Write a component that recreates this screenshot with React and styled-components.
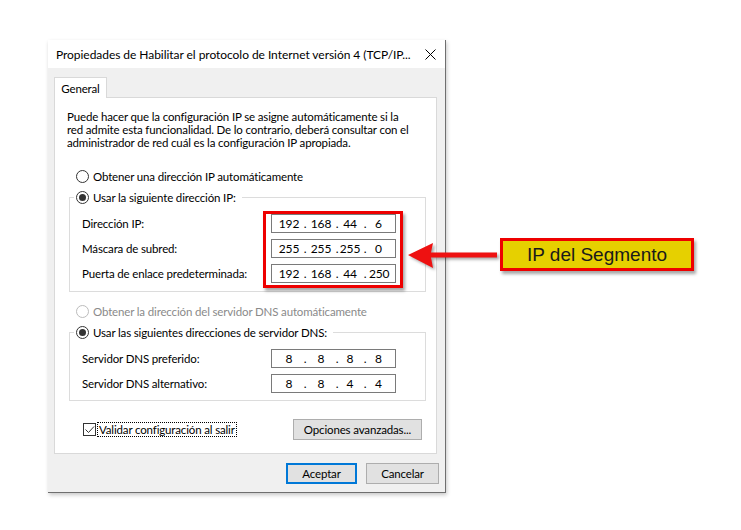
import React from 'react';
import styled, { createGlobalStyle } from 'styled-components';

const GlobalStyle = createGlobalStyle`
    body {
        margin: 0;
        background: #fff;
        font-family: Lato, "Noto Sans", sans-serif;
        font-size: 11.5px;
        letter-spacing: -0.15px;
        color: #000;
    }
`;

const Canvas = styled.div`
    position: relative;
    width: 741px;
    height: 530px;
    overflow: hidden;
    padding: 40px 0 0 48px;
    box-sizing: border-box;
`;

const Window = styled.div`
    width: 398px;
    height: 453px;
    box-sizing: border-box;
    display: flex;
    flex-direction: column;
    background: #f0f0f0;
    border-right: 1px solid #6f6f6f;
    border-bottom: 1px solid #6f6f6f;
    box-shadow: 1px 2px 4px rgba(0, 0, 0, 0.22);
`;

const TitleBar = styled.div`
    height: 28px;
    flex: none;
    background: #fff;
    display: flex;
    align-items: center;
    justify-content: space-between;
    padding: 0 9px 0 8px;
    white-space: nowrap;
`;

const Title = styled.span`
    font-size: 12px;
    letter-spacing: -0.05px;
    overflow: hidden;
`;

const Body = styled.div`
    flex: 1;
    display: flex;
    flex-direction: column;
    padding: 9px 8px 0 6px;
`;

const Tab = styled.div`
    width: 53px;
    height: 21px;
    box-sizing: border-box;
    display: flex;
    align-items: center;
    justify-content: center;
    background: #fff;
    border: 1px solid #d9d9d9;
    border-bottom: none;
    margin-bottom: -1px;
    position: relative;
    z-index: 1;
`;

const Panel = styled.div`
    width: 383px;
    height: 357px;
    box-sizing: border-box;
    background: #fff;
    border: 1px solid #d9d9d9;
    padding: 12px 0 0 12px;
    display: flex;
    flex-direction: column;
    white-space: nowrap;
`;

const Intro = styled.p`
    margin: 0;
    line-height: 13px;
`;

const RadioRow = styled.label`
    display: flex;
    align-items: center;
    gap: 4px;
    height: 13px;
    line-height: 13px;
    margin: ${p => p.$top}px 0 0 9px;
    color: ${p => (p.$disabled ? '#8a8a8a' : '#000')};
`;

const Radio = styled.span`
    width: 13px;
    height: 13px;
    box-sizing: border-box;
    border-radius: 50%;
    border: 1px solid ${p => (p.$disabled ? '#bcbcbc' : '#333')};
    background: #fff;
    display: flex;
    align-items: center;
    justify-content: center;
    flex: none;

    &::after {
        content: '';
        width: 7px;
        height: 7px;
        border-radius: 50%;
        background: ${p => (p.$checked ? '#333' : 'transparent')};
    }
`;

const Group = styled.fieldset`
    width: 357px;
    box-sizing: border-box;
    margin: 8px 0 0 2px;
    padding: 10px 0 ${p => p.$bottom}px 0;
    border: 1px solid #dcdcdc;
    display: flex;
    flex-direction: column;
    gap: 6px;
`;

const Legend = styled.legend`
    margin-left: 4px;
    padding: 0 6px 0 2px;
    line-height: 13px;
    display: flex;
    align-items: center;
    gap: 4px;
`;

const FieldRow = styled.div`
    display: flex;
    align-items: center;
    height: 19px;
    padding-left: 12px;
`;

const FieldLabel = styled.span`
    width: 189px;
    flex: none;
`;

const IpBox = styled.div`
    width: 125px;
    height: 19px;
    box-sizing: border-box;
    border: 1px solid #7a7a7a;
    background: #fff;
    display: flex;
    align-items: center;
    padding-left: 3px;
    line-height: 17px;
    font-size: 12px;
`;

const Octet = styled.span`
    width: ${p => p.$w}px;
    text-align: center;
    flex: none;
`;

const Footer = styled.div`
    display: flex;
    align-items: center;
    justify-content: space-between;
    margin: 18px 0 0 16px;
    width: 339px;
`;

const CheckLabel = styled.label`
    display: flex;
    align-items: center;
    gap: 1px;
`;

const CheckBox = styled.span`
    width: 13px;
    height: 13px;
    box-sizing: border-box;
    border: 1px solid #333;
    background: #fff;
    display: flex;
    align-items: center;
    justify-content: center;
`;

const Focus = styled.span`
    border: 1px dotted #000;
    padding: 0 1px;
    line-height: 13px;
`;

const Button = styled.button`
    font: inherit;
    letter-spacing: inherit;
    color: #000;
    height: 21px;
    width: ${p => p.$w}px;
    padding: 0;
    background: #e1e1e1;
    border: ${p => (p.$primary ? '2px solid #0078d7' : '1px solid #adadad')};
`;

const Actions = styled.div`
    display: flex;
    justify-content: flex-end;
    gap: 9px;
    margin: 9px -2px 0 0;
`;

const Highlight = styled.div`
    position: absolute;
    left: 263px;
    top: 211px;
    width: 140px;
    height: 77px;
    box-sizing: border-box;
    border: 3px solid #ee0000;
    box-shadow: 2px 3px 3px rgba(0, 0, 0, 0.35);
`;

const ArrowSvg = styled.svg`
    position: absolute;
    left: 404px;
    top: 238px;
    filter: drop-shadow(2px 2px 1.5px rgba(0, 0, 0, 0.35));
`;

const Callout = styled.div`
    position: absolute;
    left: 500px;
    top: 238px;
    width: 194px;
    height: 33px;
    box-sizing: border-box;
    border: 3px solid #ee0000;
    background: #e6d000;
    display: flex;
    align-items: center;
    justify-content: center;
    font-family: "Liberation Sans", Arial, sans-serif;
    font-size: 19px;
    letter-spacing: 0;
    color: #1a1a1a;
    box-shadow: 2px 3px 3px rgba(0, 0, 0, 0.35);
`;

const widths = [28, 4, 28, 4, 22, 8, 19];

const IpField = ({ value }) => {
    const parts = value.split('.');
    const cells = [];
    parts.forEach((p, i) => {
        cells.push(<Octet key={'o' + i} $w={widths[i * 2]}>{p}</Octet>);
        if (i < 3) cells.push(<Octet key={'d' + i} $w={widths[i * 2 + 1]}>.</Octet>);
    });
    return <IpBox>{cells}</IpBox>;
};

const Field = ({ label, value }) => (
    <FieldRow>
        <FieldLabel>{label}</FieldLabel>
        <IpField value={value} />
    </FieldRow>
);

export default function App() {
    return (
        <Canvas>
            <GlobalStyle />
            <Window>
                <TitleBar>
                    <Title>Propiedades de Habilitar el protocolo de Internet versión 4 (TCP/IP...</Title>
                    <svg width="11" height="11" viewBox="0 0 11 11">
                        <path d="M0.5 0.5 L10.5 10.5 M10.5 0.5 L0.5 10.5" stroke="#000" strokeWidth="1" />
                    </svg>
                </TitleBar>
                <Body>
                    <Tab>General</Tab>
                    <Panel>
                        <Intro>
                            Puede hacer que la configuración IP se asigne automáticamente si la<br />
                            red admite esta funcionalidad. De lo contrario, deberá consultar con el<br />
                            administrador de red cuál es la configuración IP apropiada.
                        </Intro>
                        <RadioRow $top={21}>
                            <Radio />
                            Obtener una dirección IP automáticamente
                        </RadioRow>
                        <Group $bottom={8}>
                            <Legend>
                                <Radio $checked />
                                Usar la siguiente dirección IP:
                            </Legend>
                            <Field label="Dirección IP:" value="192.168.44.6" />
                            <Field label="Máscara de subred:" value="255.255.255.0" />
                            <Field label="Puerta de enlace predeterminada:" value="192.168.44.250" />
                        </Group>
                        <RadioRow $top={13} $disabled>
                            <Radio $disabled />
                            Obtener la dirección del servidor DNS automáticamente
                        </RadioRow>
                        <Group $bottom={7}>
                            <Legend>
                                <Radio $checked />
                                Usar las siguientes direcciones de servidor DNS:
                            </Legend>
                            <Field label="Servidor DNS preferido:" value="8.8.8.8" />
                            <Field label="Servidor DNS alternativo:" value="8.8.4.4" />
                        </Group>
                        <Footer>
                            <CheckLabel>
                                <CheckBox>
                                    <svg width="11" height="11" viewBox="0 0 11 11">
                                        <path d="M1.5 5.5 L4.5 8.5 L10 2.5" stroke="#333" strokeWidth="1" fill="none" />
                                    </svg>
                                </CheckBox>
                                <Focus>Validar configuración al salir</Focus>
                            </CheckLabel>
                            <Button $w={129}>Opciones avanzadas...</Button>
                        </Footer>
                    </Panel>
                    <Actions>
                        <Button $primary $w={71}>Aceptar</Button>
                        <Button $w={73}>Cancelar</Button>
                    </Actions>
                </Body>
            </Window>
            <Highlight />
            <ArrowSvg width="98" height="36" viewBox="0 0 98 36">
                <path d="M4 17 L29 5 L27 14.5 L93 14.5 L93 19.5 L27 19.5 L29 30 Z" fill="#ee1111" />
            </ArrowSvg>
            <Callout>IP del Segmento</Callout>
        </Canvas>
    );
}
